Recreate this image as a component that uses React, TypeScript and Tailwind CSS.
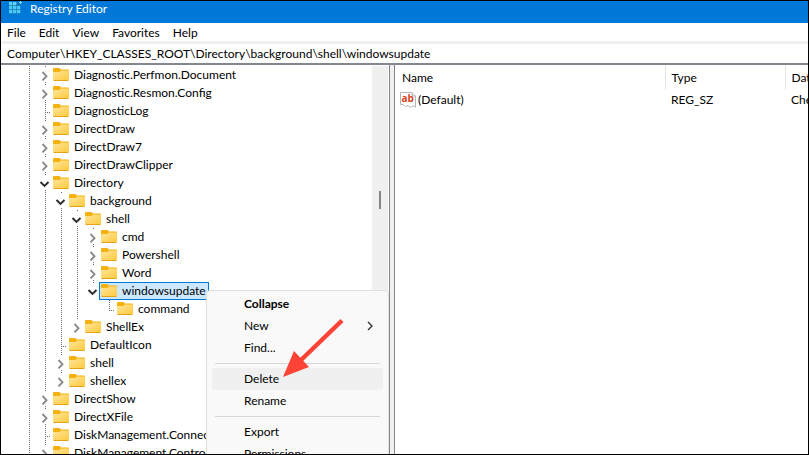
import React from "react";

type Guide = "line" | "none";
type Node = {
  name: string;
  guides: Guide[];
  state: "open" | "closed" | "leaf";
  last?: boolean;
  selected?: boolean;
};

const L: Guide = "line";
const N: Guide = "none";

const nodes: Node[] = [
  { name: "Diagnostic.Perfmon.Document", guides: [L], state: "closed" },
  { name: "Diagnostic.Resmon.Config", guides: [L], state: "closed" },
  { name: "DiagnosticLog", guides: [L], state: "leaf" },
  { name: "DirectDraw", guides: [L], state: "closed" },
  { name: "DirectDraw7", guides: [L], state: "closed" },
  { name: "DirectDrawClipper", guides: [L], state: "closed" },
  { name: "Directory", guides: [L], state: "open" },
  { name: "background", guides: [L, L], state: "open" },
  { name: "shell", guides: [L, L, L], state: "open" },
  { name: "cmd", guides: [L, L, L, L], state: "closed" },
  { name: "Powershell", guides: [L, L, L, L], state: "closed" },
  { name: "Word", guides: [L, L, L, L], state: "closed" },
  { name: "windowsupdate", guides: [L, L, L, L], state: "open", last: true, selected: true },
  { name: "command", guides: [L, L, L, L, N], state: "leaf", last: true },
  { name: "ShellEx", guides: [L, L, L], state: "closed", last: true },
  { name: "DefaultIcon", guides: [L, L], state: "leaf" },
  { name: "shell", guides: [L, L], state: "closed" },
  { name: "shellex", guides: [L, L], state: "closed", last: true },
  { name: "DirectShow", guides: [L], state: "closed" },
  { name: "DirectXFile", guides: [L], state: "closed" },
  { name: "DiskManagement.Connection", guides: [L], state: "leaf" },
  { name: "DiskManagement.Control", guides: [L], state: "closed" },
];

function GuideCell({ kind }: { kind: Guide }) {
  return (
    <svg className="h-[18px] w-4 shrink-0" viewBox="0 0 16 18" shapeRendering="crispEdges">
      {kind === "line" && <path d="M8.5 0V18" stroke="#6b6b6b" strokeDasharray="1 1" />}
    </svg>
  );
}

function NodeCell({ node }: { node: Node }) {
  const { state, last } = node;
  return (
    <svg className="h-[18px] w-[14px] shrink-0" viewBox="0 0 14 18" fill="none">
      <g stroke="#6b6b6b" strokeDasharray="1 1" shapeRendering="crispEdges">
        {state === "leaf" ? (
          <>
            <path d={last ? "M8.5 0V10" : "M8.5 0V18"} />
            <path d="M8 10.5H14" />
          </>
        ) : (
          <>
            <path d="M8.5 0V1" />
            {!last && <path d="M8.5 16V18" />}
          </>
        )}
      </g>
      {state === "open" && <path d="M3.500 8l4 4 4-4" stroke="#2b2b2b" strokeWidth="1.900" />}
      {state === "closed" && <path d="M5.500 6l4 4.200-4 4.200" stroke="#8a8a8a" strokeWidth="1.900" />}
    </svg>
  );
}

function Folder() {
  return (
    <svg className="h-4 w-4 shrink-0" viewBox="0 0 16 16">
      <defs>
        <linearGradient id="folder" x1="0" y1="0" x2="1" y2="1">
          <stop offset="0" stopColor="#ffe69c" />
          <stop offset="1" stopColor="#fec93c" />
        </linearGradient>
      </defs>
      <path d="M0 2Q0 1 1 1H6.500L8 2.500H15Q16 2.500 16 3.500V8H0Z" fill="#f5b10e" />
      <path d="M0 5H6.500L8 3.500H15.300Q16 3.500 16 4.200V12.800Q16 13.500 15.300 13.500H.7Q0 13.500 0 12.800Z" fill="url(#folder)" />
      <path d="M.5 13.500H15.500" stroke="#e3a21a" />
    </svg>
  );
}

function TreeRow({ node }: { node: Node }) {
  return (
    <li className="flex h-[18px] pl-5">
      {node.guides.map((g, i) => (
        <GuideCell key={i} kind={g} />
      ))}
      <NodeCell node={node} />
      <button
        className={
          "flex h-[18px] shrink-0 items-center gap-1 border pl-px pr-0.5 whitespace-nowrap " +
          (node.selected ? "border-[#0078d7] bg-[#cce8ff]" : "border-transparent")
        }
      >
        <Folder />
        <span className="pl-px">{node.name}</span>
      </button>
    </li>
  );
}

function AppIcon() {
  return (
    <svg className="h-4 w-4" viewBox="0 0 16 16">
      <rect x="1" y="2" width="11" height="11" fill="#1477b5" />
      {[0, 1, 2].map((r) =>
        [0, 1, 2].map((c) =>
          r === 0 && c === 2 ? null : (
            <rect key={`${r}${c}`} x={1 + c * 4} y={1 + r * 4} width="3.300" height="3.300" fill={r === 0 ? "#5fd4fb" : "#4cc8f5"} />
          ),
        ),
      )}
      <path d="M12.500 0V3M11 1.500H14" stroke="#7fe0ff" />
    </svg>
  );
}

function StringIcon() {
  return (
    <svg className="h-4 w-4" viewBox="0 0 16 16">
      <path d="M.5 .5H12L15.500 4V15L12.500 14 10.500 15.500 8 13.500 5.500 14.500 3 12.500H.5Z" fill="#fff" stroke="#b4b4b4" />
      <path d="M12 .5V4H15.500" fill="#e8e8e8" stroke="#b4b4b4" />
      <text x="1.500" y="10" fill="#d9431e" fontSize="10" fontWeight="700" fontFamily="Open Sans, sans-serif">
        ab
      </text>
    </svg>
  );
}

function MenuItem({ label, bold, hover, arrow }: { label: string; bold?: boolean; hover?: boolean; arrow?: boolean }) {
  return (
    <button
      role="menuitem"
      className={
        "flex h-[22px] w-full items-center justify-between rounded-[3px] pl-8 pr-2 " +
        (bold ? "font-bold " : "") +
        (hover ? "bg-[#f0f0f0]" : "")
      }
    >
      {label}
      {arrow && (
        <svg className="h-[10px] w-[10px]" viewBox="0 0 10 10" fill="none">
          <path d="M3 1l4 4-4 4" stroke="#2b2b2b" strokeWidth="1.300" />
        </svg>
      )}
    </button>
  );
}

function Separator() {
  return <div role="separator" className="mx-[3px] my-1 h-px bg-[#d7d7d7]" />;
}

function ContextMenu() {
  return (
    <div
      role="menu"
      className="absolute top-[290px] left-[206px] w-[183px] rounded-t-[4px] border border-[#dfdfdf] bg-[#f9f9f9] px-[5px] pt-[2px] pb-1"
    >
      <MenuItem label="Collapse" bold />
      <MenuItem label="New" arrow />
      <MenuItem label="Find..." />
      <Separator />
      <MenuItem label="Delete" hover />
      <MenuItem label="Rename" />
      <Separator />
      <MenuItem label="Export" />
      <MenuItem label="Permissions..." />
    </div>
  );
}

export default function App() {
  return (
    <div className="relative flex h-screen w-full flex-col overflow-hidden bg-white font-[Lato,'Open_Sans',sans-serif] text-[12px] leading-4 text-black">
      <header className="flex h-[23px] shrink-0 items-start gap-[6px] border-t border-black bg-[#0078d7] pl-2 text-white">
        <AppIcon />
        <h1>Registry Editor</h1>
      </header>
      <nav className="flex h-[18px] shrink-0 items-center gap-[13px] pt-0.5 pl-[7px]">
        {["File", "Edit", "View", "Favorites", "Help"].map((m) => (
          <button key={m}>{m}</button>
        ))}
      </nav>
      <div className="flex shrink-0 border-t-[3px] border-b-2 border-t-[#f0f0f0] border-b-[#828790]">
        <input
          aria-label="Address"
          readOnly
          className="h-[19px] w-full bg-white pl-[7px] outline-none"
          value={"Computer\\HKEY_CLASSES_ROOT\\Directory\\background\\shell\\windowsupdate"}
        />
      </div>
      <main className="flex min-h-0 flex-1">
        <section aria-label="Keys" className="flex w-[390px] shrink-0 border-r border-[#828790] pl-px">
          <ul className="min-w-0 flex-1 overflow-hidden pt-px">
            {nodes.map((n, i) => (
              <TreeRow key={i} node={n} />
            ))}
          </ul>
          <div className="mt-px mr-px flex w-4 justify-center bg-[#f0f0f0] pt-[125px]">
            <div className="h-[18px] w-0.5 bg-[#868686]" />
          </div>
        </section>
        <div className="w-1 shrink-0 bg-[#f0f0f0]" />
        <section aria-label="Values" className="min-w-0 flex-1 overflow-hidden border-l border-[#828790]">
          <table className="w-[520px] table-fixed text-left">
            <thead>
              <tr className="h-[25px]">
                <th className="w-[270px] border-r border-[#e5e5e5] pl-[7px] font-normal">Name</th>
                <th className="w-[120px] border-r border-[#e5e5e5] pl-[6px] font-normal">Type</th>
                <th className="pl-[6px] font-normal">Data</th>
              </tr>
            </thead>
            <tbody>
              <tr className="h-[19px]">
                <td className="pl-[5px]">
                  <div className="flex items-center gap-[2px]">
                    <StringIcon />
                    (Default)
                  </div>
                </td>
                <td className="pl-[6px]">REG_SZ</td>
                <td className="pl-[6px] whitespace-nowrap">Checks for updates</td>
              </tr>
            </tbody>
          </table>
        </section>
      </main>
      <ContextMenu />
      <svg className="pointer-events-none absolute top-[316px] left-[280px] h-16 w-16" viewBox="0 0 64 64">
        <path d="M62 4.500L20 45" stroke="#fd4336" strokeWidth="4.500" />
        <path d="M3 61L14 35 29 51Z" fill="#fd4336" />
      </svg>
      <div className="pointer-events-none absolute inset-0 border border-black" />
    </div>
  );
}
